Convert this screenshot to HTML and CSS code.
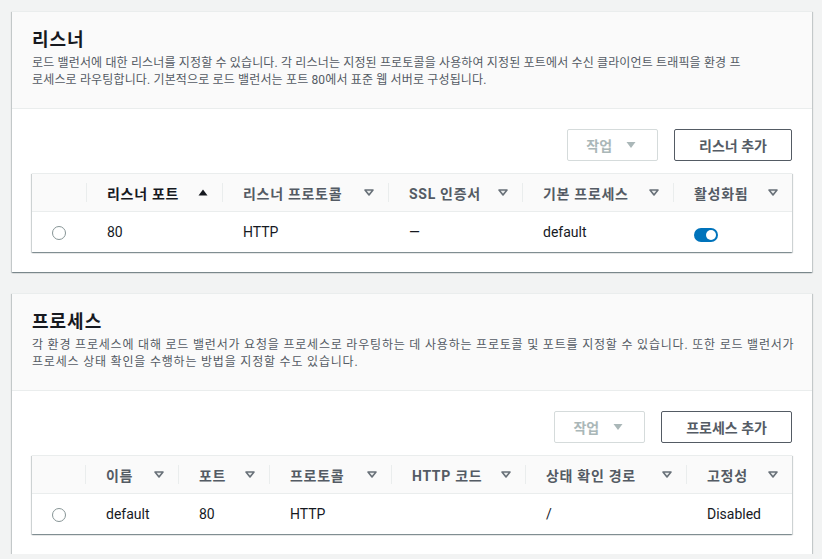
FILE: index.html
```html
<!DOCTYPE html>
<html lang="ko">
<head>
    <meta charset="UTF-8">
    <meta name="viewport" content="width=device-width, initial-scale=1.0">
    <title>리스너 및 프로세스</title>
    <link rel="stylesheet" href="styles.css">
</head>
<body>
    <div class="page">
        <!-- 리스너 -->
        <section class="panel">
            <header class="panel-head">
                <h2>리스너</h2>
                <p>로드 밸런서에 대한 리스너를 지정할 수 있습니다. 각 리스너는 지정된 프로토콜을 사용하여 지정된 포트에서 수신 클라이언트 트래픽을 환경 프<br>로세스로 라우팅합니다. 기본적으로 로드 밸런서는 포트 80에서 표준 웹 서버로 구성됩니다.</p>
            </header>
            <div class="panel-body">
                <div class="actions">
                    <button class="btn btn-menu" disabled>작업 <svg class="caret" width="16" height="10" viewBox="0 0 16 10"><polygon points="3.5,2 12.5,2 8,8" /></svg></button>
                    <button class="btn">리스너 추가</button>
                </div>
                <div class="table-wrap">
                    <table class="grid listeners">
                        <colgroup>
                            <col class="c-sel"><col class="c-port"><col class="c-proto"><col class="c-ssl"><col class="c-proc"><col class="c-on">
                        </colgroup>
                        <thead>
                            <tr>
                                <th></th>
                                <th><div class="th-in sorted">리스너 포트 <svg class="sort" width="10" height="7" viewBox="0 0 10 7"><polygon points="5,0.5 9.5,6.5 0.5,6.5" /></svg></div></th>
                                <th><div class="th-in">리스너 프로토콜 <svg class="sort" width="10" height="7" viewBox="0 0 10 7"><polygon points="1,1 9,1 5,6" /></svg></div></th>
                                <th><div class="th-in">SSL 인증서 <svg class="sort" width="10" height="7" viewBox="0 0 10 7"><polygon points="1,1 9,1 5,6" /></svg></div></th>
                                <th><div class="th-in">기본 프로세스 <svg class="sort" width="10" height="7" viewBox="0 0 10 7"><polygon points="1,1 9,1 5,6" /></svg></div></th>
                                <th><div class="th-in">활성화됨 <svg class="sort" width="10" height="7" viewBox="0 0 10 7"><polygon points="1,1 9,1 5,6" /></svg></div></th>
                            </tr>
                        </thead>
                        <tbody>
                            <tr>
                                <td class="sel"><span class="radio"></span></td>
                                <td>80</td>
                                <td>HTTP</td>
                                <td>—</td>
                                <td>default</td>
                                <td><span class="toggle"></span></td>
                            </tr>
                        </tbody>
                    </table>
                </div>
            </div>
        </section>

        <!-- 프로세스 -->
        <section class="panel">
            <header class="panel-head">
                <h2>프로세스</h2>
                <p class="desc-wide">각 환경 프로세스에 대해 로드 밸런서가 요청을 프로세스로 라우팅하는 데 사용하는 프로토콜 및 포트를 지정할 수 있습니다. 또한 로드 밸런서가<br>프로세스 상태 확인을 수행하는 방법을 지정할 수도 있습니다.</p>
            </header>
            <div class="panel-body">
                <div class="actions">
                    <button class="btn btn-menu" disabled>작업 <svg class="caret" width="16" height="10" viewBox="0 0 16 10"><polygon points="3.5,2 12.5,2 8,8" /></svg></button>
                    <button class="btn">프로세스 추가</button>
                </div>
                <div class="table-wrap">
                    <table class="grid processes">
                        <colgroup>
                            <col class="c-sel"><col class="c-name"><col class="c-pport"><col class="c-pproto"><col class="c-code"><col class="c-path"><col class="c-sticky">
                        </colgroup>
                        <thead>
                            <tr>
                                <th></th>
                                <th><div class="th-in">이름 <svg class="sort" width="10" height="7" viewBox="0 0 10 7"><polygon points="1,1 9,1 5,6" /></svg></div></th>
                                <th><div class="th-in">포트 <svg class="sort" width="10" height="7" viewBox="0 0 10 7"><polygon points="1,1 9,1 5,6" /></svg></div></th>
                                <th><div class="th-in">프로토콜 <svg class="sort" width="10" height="7" viewBox="0 0 10 7"><polygon points="1,1 9,1 5,6" /></svg></div></th>
                                <th><div class="th-in">HTTP 코드 <svg class="sort" width="10" height="7" viewBox="0 0 10 7"><polygon points="1,1 9,1 5,6" /></svg></div></th>
                                <th><div class="th-in">상태 확인 경로 <svg class="sort" width="10" height="7" viewBox="0 0 10 7"><polygon points="1,1 9,1 5,6" /></svg></div></th>
                                <th><div class="th-in">고정성 <svg class="sort" width="10" height="7" viewBox="0 0 10 7"><polygon points="1,1 9,1 5,6" /></svg></div></th>
                            </tr>
                        </thead>
                        <tbody>
                            <tr>
                                <td class="sel"><span class="radio"></span></td>
                                <td>default</td>
                                <td>80</td>
                                <td>HTTP</td>
                                <td></td>
                                <td>/</td>
                                <td>Disabled</td>
                            </tr>
                        </tbody>
                    </table>
                </div>
            </div>
        </section>
    </div>
</body>
</html>
```

FILE: styles.css
```css
body {
    margin: 0;
    background-color: #f2f3f3;
    font-family: Roboto, "Noto Sans CJK KR", sans-serif;
    color: #16191f;
}
.page {
    padding: 11px 10px 0 12px;
}
.panel {
    width: 800px;
    background-color: #fff;
    border-top: 1px solid #eaeded;
    box-sizing: border-box;
    box-shadow: 0 1px 1px 0 rgba(0, 28, 36, 0.3), 1px 1px 1px 0 rgba(0, 28, 36, 0.15), -1px 1px 1px 0 rgba(0, 28, 36, 0.15);
}
.panel + .panel {
    margin-top: 21px;
}
.panel-head {
    background-color: #fafafa;
    border-bottom: 1px solid #eaeded;
    padding: 17px 20px 19px;
}
.panel-head h2 {
    margin: 0 0 4px;
    font-size: 18px;
    line-height: 22px;
    font-weight: 700;
    letter-spacing: 1px;
    color: #16191f;
}
.panel-head p {
    margin: 0;
    font-size: 12px;
    line-height: 17px;
    letter-spacing: 0.15px;
    color: #545b64;
    white-space: nowrap;
}
.panel-head p.desc-wide {
    letter-spacing: 0.8px;
}
.panel-body {
    padding: 20px;
}
.actions {
    display: flex;
    justify-content: flex-end;
    gap: 16px;
    margin-bottom: 12px;
}
.btn {
    display: flex;
    align-items: center;
    height: 32px;
    padding: 0 24px;
    background-color: #fff;
    border: 1px solid #545b64;
    border-radius: 2px;
    font-family: inherit;
    font-size: 14px;
    font-weight: 700;
    color: #545b64;
    cursor: pointer;
}
.btn-menu {
    padding: 0 18px 0 18px;
    border-color: #d5dbdb;
    color: #aab7b8;
    gap: 11px;
    cursor: default;
}
.caret polygon {
    fill: #aab7b8;
}
.table-wrap {
    border-top: 1px solid #eaeded;
    box-shadow: 0 1px 1px 0 rgba(0, 28, 36, 0.3), 1px 1px 1px 0 rgba(0, 28, 36, 0.15), -1px 1px 1px 0 rgba(0, 28, 36, 0.15);
}
.grid {
    width: 760px;
    table-layout: fixed;
    border-collapse: collapse;
}
.grid th {
    height: 37px;
    padding: 0;
    background-color: #fafafa;
    border-bottom: 1px solid #eaeded;
    text-align: left;
    vertical-align: middle;
}
.th-in {
    display: flex;
    justify-content: space-between;
    align-items: center;
    height: 19px;
    padding: 0 14px 0 20px;
    border-left: 1px solid #eaeded;
    font-size: 14px;
    font-weight: 700;
    letter-spacing: 0.7px;
    color: #545b64;
    white-space: nowrap;
}
.th-in.sorted {
    color: #16191f;
}
.sort polygon {
    fill: #eaeded;
    stroke: #687078;
    stroke-width: 1.6;
    stroke-linejoin: round;
}
.sorted .sort polygon {
    fill: #16191f;
    stroke: none;
}
.grid td {
    height: 40px;
    padding: 0 0 0 21px;
    font-size: 14px;
    color: #16191f;
    vertical-align: middle;
}
.grid td.sel {
    padding: 0;
    text-align: center;
}
.radio {
    display: inline-block;
    width: 14px;
    height: 14px;
    border: 1px solid #879596;
    border-radius: 50%;
    box-sizing: border-box;
    vertical-align: middle;
}
.toggle {
    display: flex;
    justify-content: flex-end;
    align-items: center;
    width: 24px;
    height: 14px;
    padding: 0 2px;
    margin-top: 5px;
    box-sizing: border-box;
    border-radius: 7px;
    background-color: #0073bb;
}
.toggle::after {
    content: "";
    width: 10px;
    height: 10px;
    border-radius: 50%;
    background-color: #fff;
}

/* column widths */
.c-sel { width: 54px; }
.c-port { width: 136px; }
.c-proto { width: 166px; }
.c-ssl { width: 134px; }
.c-proc { width: 151px; }
.c-on { width: 119px; }

.processes .c-sel { width: 53px; }
.c-name { width: 93px; }
.c-pport { width: 91px; }
.c-pproto { width: 122px; }
.c-code { width: 134px; }
.c-path { width: 161px; }
.c-sticky { width: 106px; }
```
